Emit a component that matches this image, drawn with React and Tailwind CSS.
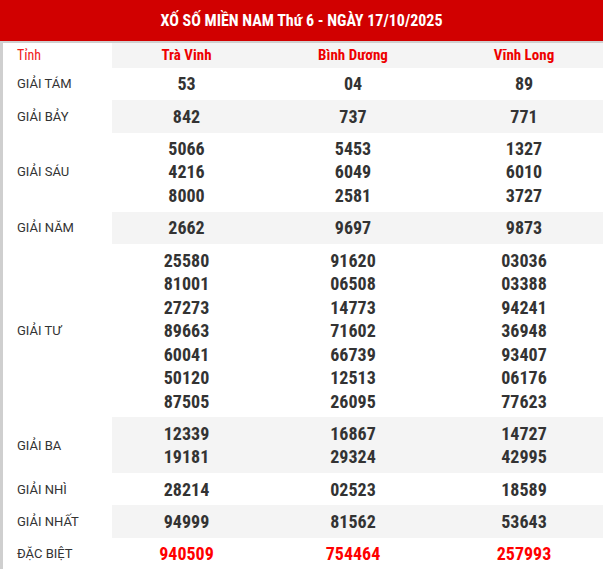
import React from "react";

const rows = [
  { label: "GIẢI TÁM", vals: [["53"], ["04"], ["89"]] },
  { label: "GIẢI BẢY", vals: [["842"], ["737"], ["771"]] },
  { label: "GIẢI SÁU", vals: [["5066", "4216", "8000"], ["5453", "6049", "2581"], ["1327", "6010", "3727"]] },
  { label: "GIẢI NĂM", vals: [["2662"], ["9697"], ["9873"]] },
  {
    label: "GIẢI TƯ",
    vals: [
      ["25580", "81001", "27273", "89663", "60041", "50120", "87505"],
      ["91620", "06508", "14773", "71602", "66739", "12513", "26095"],
      ["03036", "03388", "94241", "36948", "93407", "06176", "77623"],
    ],
  },
  { label: "GIẢI BA", vals: [["12339", "19181"], ["16867", "29324"], ["14727", "42995"]] },
  { label: "GIẢI NHÌ", vals: [["28214"], ["02523"], ["18589"]] },
  { label: "GIẢI NHẤT", vals: [["94999"], ["81562"], ["53643"]] },
  { label: "ĐẶC BIỆT", vals: [["940509"], ["754464"], ["257993"]], special: true },
];

export default function App() {
  return (
    <div className="w-[603px] h-[569px] overflow-hidden bg-white font-['Roboto',sans-serif]">
      <div className="h-[41px] bg-[#d10000] flex items-center justify-center text-white font-bold text-[16px] font-stretch-condensed">
        XỐ SỐ MIỀN NAM Thứ 6 - NGÀY 17/10/2025
      </div>
      <div className="border-l-[3px] border-t-2 border-[#cfcfcf]">
        <div className="grid grid-cols-[109px_149px_184px_158px]">
          <div className="h-[25px] flex items-center pl-[14px] text-[14px] text-[#f02020] font-stretch-condensed">Tỉnh</div>
          {["Trà Vinh", "Bình Dương", "Vĩnh Long"].map((n) => (
            <div key={n} className="h-[25px] bg-[#f4f4f4] flex items-center justify-center text-[15px] font-bold text-[#ee0000] font-stretch-condensed">
              {n}
            </div>
          ))}
          {rows.map((r, i) => {
            const gray = i % 2 === 1;
            return (
              <React.Fragment key={r.label}>
                <div className="flex items-center pl-[14px] text-[13px] text-[#333]">{r.label}</div>
                {r.vals.map((v, j) => (
                  <div
                    key={j}
                    className={`flex flex-col items-center justify-center py-[4.4px] ${gray ? "bg-[#f4f4f4]" : "bg-white"}`}
                  >
                    {v.map((x, k) => (
                      <div
                        key={k}
                        className={`leading-[23.5px] text-[18px] font-bold font-stretch-condensed ${r.special ? "text-[#ff0000]" : "text-[#333]"}`}
                      >
                        {x}
                      </div>
                    ))}
                  </div>
                ))}
              </React.Fragment>
            );
          })}
        </div>
      </div>
    </div>
  );
}
